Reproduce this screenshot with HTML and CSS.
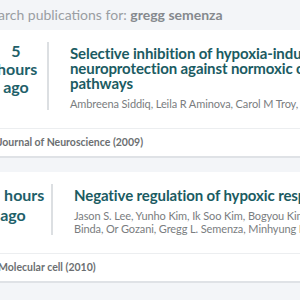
FILE: index.html
```
<!DOCTYPE html>
<html lang="en">
<head>
    <meta charset="UTF-8">
    <meta name="viewport" content="width=device-width, initial-scale=1.0">
    <title>Publications</title>
    <link rel="stylesheet" href="styles.css">
</head>
<body>
    <div class="page">
        <p class="search">Search publications for: <strong>gregg semenza</strong></p>

        <div class="card">
            <div class="card-main">
                <div class="when">5 hours ago</div>
                <div class="info">
                    <h2 class="title">Selective inhibition of hypoxia-inducible factor (HIF) prolyl-hydroxylase 1 mediates<br>neuroprotection against normoxic oxidative death via HIF- and CREB-independent<br>pathways</h2>
                    <p class="authors">Ambreena Siddiq, Leila R Aminova, Carol M Troy, Kyungsun Suh, Zachary Messer, Gregg L Semenza, Rajiv R Ratan</p>
                </div>
            </div>
            <div class="card-foot">Journal of Neuroscience (2009)</div>
        </div>

        <div class="card">
            <div class="card-main">
                <div class="when when-wide">15 hours ago</div>
                <div class="info">
                    <h2 class="title">Negative regulation of hypoxic responses via induced Reptin methylation</h2>
                    <p class="authors">Jason S. Lee, Yunho Kim, Ik Soo Kim, Bogyou Kim, Hee Jung Choi, Jung Min Lee, Hee-Jung Ryu Shin, Jung Hee Kim, Ji-Young Kim, Sang-Beom Seo, Hyunsook Lee, Olivier<br>Binda, Or Gozani, Gregg L. Semenza, Minhyung Kim, Keun Il Kim, Jeung-Whan Han, Kyu-Won Kim</p>
                </div>
            </div>
            <div class="card-foot">Molecular cell (2010)</div>
        </div>
    </div>
</body>
</html>
```

FILE: styles.css
```
body {
    margin: 0;
    background: #f3f5f8;
    font-family: Lato, "Open Sans", sans-serif;
    overflow: hidden;
}
.page {
    margin-left: -17px;
    width: 900px;
}
.search {
    margin: 0;
    height: 30px;
    line-height: 30px;
    font-size: 14px;
    color: #9a9ea3;
}
.search strong {
    color: #85898e;
}
.card {
    background: #fff;
    border-bottom: 2px solid #dfe2e6;
    margin-bottom: 14px;
}
.card-main {
    display: flex;
    padding: 12px 0 18px 0;
}
.when {
    width: 64px;
    margin-left: 2px;
    flex-shrink: 0;
    box-sizing: border-box;
    padding: 0 12px;
    border-right: 2px solid #dcdfe2;
    text-align: center;
    font-size: 16px;
    font-weight: bold;
    line-height: 18px;
    color: #1e6069;
}
.when-wide {
    width: 78px;
    margin-left: -8px;
    padding: 1px 4px;
    line-height: 20px;
}
.info {
    padding: 4px 0 0 21px;
}
.title {
    margin: 0;
    font-size: 15px;
    line-height: 15px;
    letter-spacing: -0.1px;
    color: #1b5b62;
}
.authors {
    margin: 6px 0 0 0;
    font-size: 11px;
    line-height: 13px;
    letter-spacing: -0.1px;
    color: #7a7d80;
    white-space: nowrap;
}
.card-foot {
    border-top: 1px solid #eceef0;
    padding: 0 15px;
    height: 27px;
    line-height: 27px;
    font-size: 10.5px;
    font-weight: bold;
    color: #6c6f72;
}
```
